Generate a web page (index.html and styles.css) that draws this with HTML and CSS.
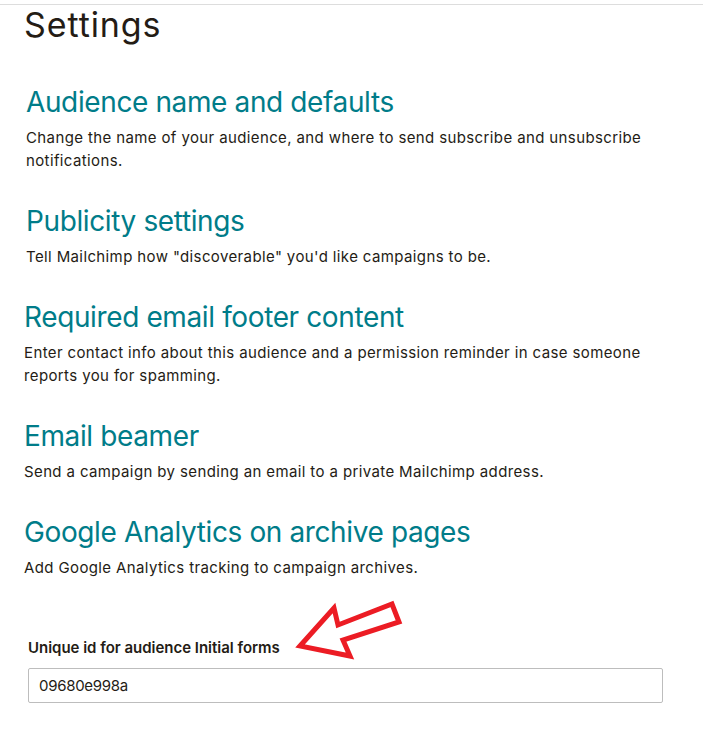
FILE: index.html
```html
<!DOCTYPE html>
<html lang="en">
<head>
<meta charset="utf-8">
<title>Settings</title>
<link rel="stylesheet" href="styles.css">
</head>
<body>
<div class="topline"></div>
<main class="page">
  <h1 class="title shift">Settings</h1>
  <section class="sec first shift">
    <h2 class="sec-head">Audience name and defaults</h2>
    <p class="sec-desc">Change the name of your audience, and where to send subscribe and unsubscribe<br>notifications.</p>
  </section>
  <section class="sec shift">
    <h2 class="sec-head">Publicity settings</h2>
    <p class="sec-desc">Tell Mailchimp how "discoverable" you'd like campaigns to be.</p>
  </section>
  <section class="sec">
    <h2 class="sec-head">Required email footer content</h2>
    <p class="sec-desc">Enter contact info about this audience and a permission reminder in case someone<br>reports you for spamming.</p>
  </section>
  <section class="sec">
    <h2 class="sec-head">Email beamer</h2>
    <p class="sec-desc">Send a campaign by sending an email to a private Mailchimp address.</p>
  </section>
  <section class="sec">
    <h2 class="sec-head">Google Analytics on archive pages</h2>
    <p class="sec-desc">Add Google Analytics tracking to campaign archives.</p>
  </section>
  <div class="field">
    <label class="field-label" for="uid">Unique id for audience Initial forms</label>
    <input class="field-input" id="uid" type="text" value="09680e998a" readonly>
    <svg class="arrow" width="120" height="70" viewBox="0 0 120 70" aria-hidden="true">
      <polygon points="8,48 42,10 46,27 100,6 107,24 51,42 58,58" fill="none" stroke="#ec1c24" stroke-width="5" stroke-linejoin="miter"/>
    </svg>
  </div>
</main>
</body>
</html>
```

FILE: styles.css
```css
html, body {
  margin: 0;
  padding: 0;
  background: #ffffff;
}
body {
  font-family: Inter, "Liberation Sans", Arial, sans-serif;
  color: #241c15;
}
.topline {
  height: 1px;
  background: #dddddd;
  margin-top: 4px;
}
.page {
  padding-left: 24px;
  width: 660px;
  display: flex;
  flex-direction: column;
}
.shift {
  margin-left: 2px;
}
.title {
  margin: 0;
  font-size: 34px;
  line-height: 40px;
  font-weight: 400;
  letter-spacing: 0.9px;
  color: #241c15;
}
.sec {
  display: flex;
  flex-direction: column;
  gap: 7px;
  margin-top: 32px;
}
.sec.first {
  margin-top: 40px;
}
.sec-head {
  margin: 0;
  font-size: 28px;
  line-height: 34px;
  font-weight: 400;
  letter-spacing: -0.38px;
  color: #007c89;
}
.sec-desc {
  margin: 0;
  font-size: 15px;
  line-height: 23px;
  letter-spacing: 0.38px;
  color: #241c15;
}
.field {
  position: relative;
  display: flex;
  flex-direction: column;
  gap: 10px;
  margin-top: 59px;
  padding-left: 4px;
}
.field-label {
  font-size: 15px;
  line-height: 20px;
  font-weight: 600;
  letter-spacing: -0.02px;
  color: #241c15;
}
.field-input {
  box-sizing: border-box;
  width: 635px;
  height: 35px;
  border: 1px solid #bdbdbd;
  border-radius: 2px;
  padding: 0 10px;
  font-family: inherit;
  font-size: 15px;
  letter-spacing: -0.3px;
  color: #241c15;
  outline: none;
}
.arrow {
  position: absolute;
  left: 268px;
  top: -40px;
}
```
